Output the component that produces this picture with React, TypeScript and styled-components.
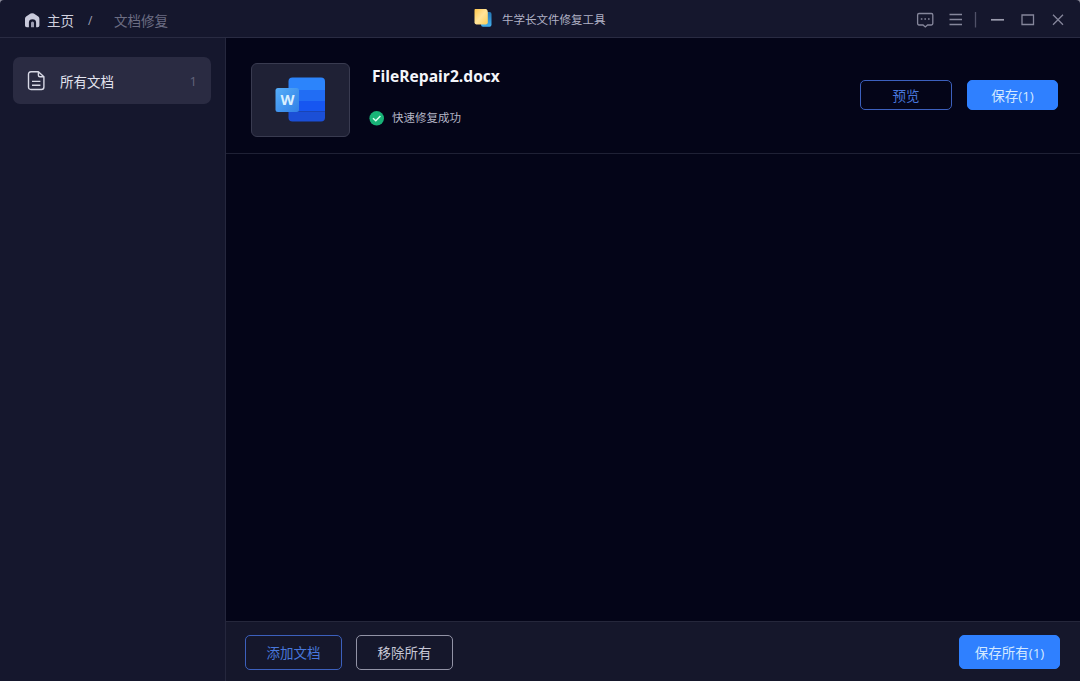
import React from 'react';
import styled, { createGlobalStyle } from 'styled-components';

const GlobalStyle = createGlobalStyle`
  * { box-sizing: border-box; }
  body { margin: 0; background: #8d8e9c; font-family: "Open Sans", "Noto Sans CJK SC", sans-serif; }
  svg { display: block; flex: none; }
`;

const Window = styled.div`
  width: 1080px;
  height: 681px;
  display: grid;
  grid-template-rows: 38px 1fr;
  border-radius: 4px 4px 0 0;
  overflow: hidden;
  background: #15172d;
  color: #d5d6e4;
  font-size: 13.5px;
  line-height: 20px;
`;

const TitleBar = styled.header`
  display: grid;
  grid-template-columns: 474px 1fr 165px;
  align-items: center;
  border-bottom: 1px solid #292b42;
  padding-top: 1px;
`;

const Breadcrumb = styled.nav`
  display: flex;
  align-items: center;
  padding: 3px 0 0 24px;
`;

const Crumb = styled.span<{ $muted?: boolean }>`
  color: ${(p) => (p.$muted ? '#6c6d83' : '#cfd0df')};
  margin-left: ${(p) => (p.$muted ? '20px' : '6px')};
`;

const Slash = styled.span`
  margin-left: 14px;
  width: 6px;
  font-size: 12px;
  color: #a0a1b4;
`;

const AppTitle = styled.div`
  display: flex;
  align-items: center;
  gap: 10px;
  font-size: 11.5px;
  color: #b1b2c6;
`;

const AppName = styled.span`
  padding-top: 2px;
`;

const WindowControls = styled.div`
  display: flex;
  align-items: center;
  padding-top: 1px;
`;

const Body = styled.div`
  display: grid;
  grid-template-columns: 226px 1fr;
  min-height: 0;
`;

const Sidebar = styled.aside`
  padding: 19px 14px 0 13px;
  border-right: 1px solid #25273d;
`;

const SidebarItem = styled.div`
  display: flex;
  align-items: center;
  height: 47px;
  padding: 1px 14px 0 14px;
  border-radius: 7px;
  background: #2a2b42;
  color: #e3e4ef;
`;

const SidebarLabel = styled.span`
  flex: 1;
  margin-left: 14px;
  padding-top: 2px;
`;

const Count = styled.span`
  font-size: 13px;
  color: #62637a;
`;

const Main = styled.main`
  display: grid;
  grid-template-rows: 116px 1fr 60px;
  background: #040518;
`;

const FileRow = styled.section`
  display: flex;
  align-items: flex-start;
  padding: 25px 22px 0 25px;
  border-bottom: 1px solid #1f2135;
`;

const Thumbnail = styled.div`
  display: flex;
  width: 99px;
  height: 74px;
  padding: 13px 0 0 23px;
  border: 1px solid #393b50;
  border-radius: 6px;
  background: #1f2135;
`;

const FileInfo = styled.div`
  flex: 1;
  padding-left: 19px;
`;

const FileName = styled.h1`
  margin: 2px 0 0 3px;
  font-size: 15.6px;
  line-height: 22px;
  font-weight: 700;
  color: #f4f5fa;
`;

const Status = styled.div`
  display: flex;
  align-items: center;
  gap: 8px;
  margin-top: 21px;
  font-size: 11.5px;
  color: #b4b5c6;
`;

const Actions = styled.div`
  display: flex;
  gap: 15px;
  padding-top: 17px;
`;

const tones = {
  solid: { background: '#2f80ff', border: '#2f80ff', color: '#d3e9ff' },
  blue: { background: 'transparent', border: '#3c60bd', color: '#4877dc' },
  light: { background: 'transparent', border: '#9293a6', color: '#c5c6d5' },
};

const Button = styled.button<{ $tone: keyof typeof tones; $width: number; $height: number }>`
  display: flex;
  align-items: center;
  justify-content: center;
  width: ${(p) => p.$width}px;
  height: ${(p) => p.$height}px;
  padding: 1px 0 0;
  border: 1px solid ${(p) => tones[p.$tone].border};
  border-radius: 5px;
  background: ${(p) => tones[p.$tone].background};
  color: ${(p) => tones[p.$tone].color};
  font: inherit;
  white-space: nowrap;
`;

const Footer = styled.footer`
  display: flex;
  gap: 14px;
  padding: 13px 20px 0 19px;
  border-top: 1px solid #25273b;
  background: #15172b;
`;

const Spacer = styled.div`
  flex: 1;
`;

const HomeIcon = () => (
  <svg width="17" height="16" viewBox="0 0 17 16">
    <path d="M6.6 .6Q8.2 -.2 9.8 .6L14.3 3.6Q15.4 4.4 15.4 5.8V12.5Q15.4 14.2 13.7 14.2H12.1V9.6Q12.1 6.2 8.5 6.2T4.9 9.6V14.2H2.8Q1 14.2 1 12.5V5.8Q1 4.4 2.1 3.6Z" fill="#c9cadb" />
    <path d="M7 14.2V10Q7 8.5 8.5 8.5T10 10V14.2Z" fill="#9c9db2" />
  </svg>
);

const AppLogo = () => (
  <svg width="18" height="21" viewBox="0 0 18 21">
    <defs>
      <linearGradient id="yellow" x1="0" y1="0" x2="1" y2="1">
        <stop stopColor="#ffc548" />
        <stop offset=".5" stopColor="#ffe49a" />
        <stop offset="1" stopColor="#ffcf56" />
      </linearGradient>
      <linearGradient id="cyan" x1="0" y1="0" x2="0" y2="1">
        <stop stopColor="#2376b5" />
        <stop offset="1" stopColor="#45b1ee" />
      </linearGradient>
    </defs>
    <path d="M8 3H15.5Q17.5 3 17.5 5V15.8Q17.5 17.8 15.5 17.8H9Q7 17.8 7 15.8Z" fill="url(#cyan)" />
    <path d="M2.3 -1H11Q13.8 -.5 13.8 2.5V13Q13.8 14.8 12 14.8H2.3Q.5 14.8 .5 13V.8Q.5 -1 2.3 -1Z" transform="translate(0 .6)" fill="url(#yellow)" />
  </svg>
);

const ControlIcons = () => (
  <svg width="165" height="22" viewBox="0 0 165 22" fill="none" stroke="#85869b" strokeWidth="1.3">
    <path d="M4 4.5H16.4Q17.8 4.5 17.8 5.9V14.6Q17.8 16 16.4 16H12.6L10.3 18 8 16H4Q2.6 16 2.6 14.6V5.9Q2.6 4.5 4 4.5Z" />
    <path d="M5.8 10H7.4M9.4 10H11M13 10H14.6" strokeWidth="1.5" />
    <path d="M34.5 5.5H47M34.5 10.5H47M34.5 15.5H47" />
    <path d="M60.5 3V18.5" stroke="#505168" />
    <path d="M76 10.8H89" strokeWidth="1.7" stroke="#9a9bad" />
    <path d="M107 6H118.5V15.5H107Z" />
    <path d="M138 5.7L148 15.7M148 5.7L138 15.7" />
  </svg>
);

const DocumentIcon = () => (
  <svg width="19" height="21" viewBox="0 0 19 21" fill="none" stroke="#d8d9e6" strokeWidth="1.4" strokeLinejoin="round">
    <path d="M4 .8H11.4L16.9 5.7V16Q16.9 18.5 14.4 18.5H4Q1.5 18.5 1.5 16V3.3Q1.5 .8 4 .8ZM11.4 .8V4.2Q11.4 5.7 12.9 5.7H16.9M5 10.4H13.4M5 14.2H13.4" />
  </svg>
);

const WordLetter = styled.text`
  font: 700 14.5px "Open Sans", sans-serif;
  fill: #d9f0ff;
`;

const WordIcon = () => (
  <svg width="51" height="46" viewBox="0 0 51 46">
    <defs>
      <clipPath id="page"><rect x="13.5" y=".5" width="36.5" height="44" rx="4" /></clipPath>
      <linearGradient id="badge" x1="0" y1="0" x2="1" y2="1">
        <stop stopColor="#55adf8" />
        <stop offset="1" stopColor="#3180e6" />
      </linearGradient>
    </defs>
    <g clipPath="url(#page)">
      <path d="M13 0H51V13H13Z" fill="#2c84fb" />
      <path d="M13 13H51V24H13Z" fill="#216df4" />
      <path d="M13 24H51V34.5H13Z" fill="#1656f1" />
      <path d="M13 34.5H51V46H13Z" fill="#1b4fd6" />
    </g>
    <rect x=".5" y="11" width="23.5" height="24" rx="2.5" fill="url(#badge)" />
    <WordLetter x="12.6" y="28" textAnchor="middle">W</WordLetter>
  </svg>
);

const SuccessIcon = () => (
  <svg width="15" height="15" viewBox="0 0 15 15">
    <circle cx="7.7" cy="7.3" r="7.3" fill="#18b377" />
    <path d="M4 7.2L6.8 9.8L11.4 5" fill="none" stroke="#dcfff0" strokeWidth="1.5" />
  </svg>
);

export default function App() {
  return (
    <>
      <GlobalStyle />
      <Window>
        <TitleBar>
          <Breadcrumb>
            <HomeIcon />
            <Crumb>主页</Crumb>
            <Slash>/</Slash>
            <Crumb $muted>文档修复</Crumb>
          </Breadcrumb>
          <AppTitle>
            <AppLogo />
            <AppName>牛学长文件修复工具</AppName>
          </AppTitle>
          <WindowControls>
            <ControlIcons />
          </WindowControls>
        </TitleBar>
        <Body>
          <Sidebar>
            <SidebarItem>
              <DocumentIcon />
              <SidebarLabel>所有文档</SidebarLabel>
              <Count>1</Count>
            </SidebarItem>
          </Sidebar>
          <Main>
            <FileRow>
              <Thumbnail>
                <WordIcon />
              </Thumbnail>
              <FileInfo>
                <FileName>FileRepair2.docx</FileName>
                <Status>
                  <SuccessIcon />
                  <span>快速修复成功</span>
                </Status>
              </FileInfo>
              <Actions>
                <Button $tone="blue" $width={92} $height={30}>预览</Button>
                <Button $tone="solid" $width={91} $height={30}>保存(1)</Button>
              </Actions>
            </FileRow>
            <div />
            <Footer>
              <Button $tone="blue" $width={97} $height={35}>添加文档</Button>
              <Button $tone="light" $width={97} $height={35}>移除所有</Button>
              <Spacer />
              <Button $tone="solid" $width={101} $height={34}>保存所有(1)</Button>
            </Footer>
          </Main>
        </Body>
      </Window>
    </>
  );
}
